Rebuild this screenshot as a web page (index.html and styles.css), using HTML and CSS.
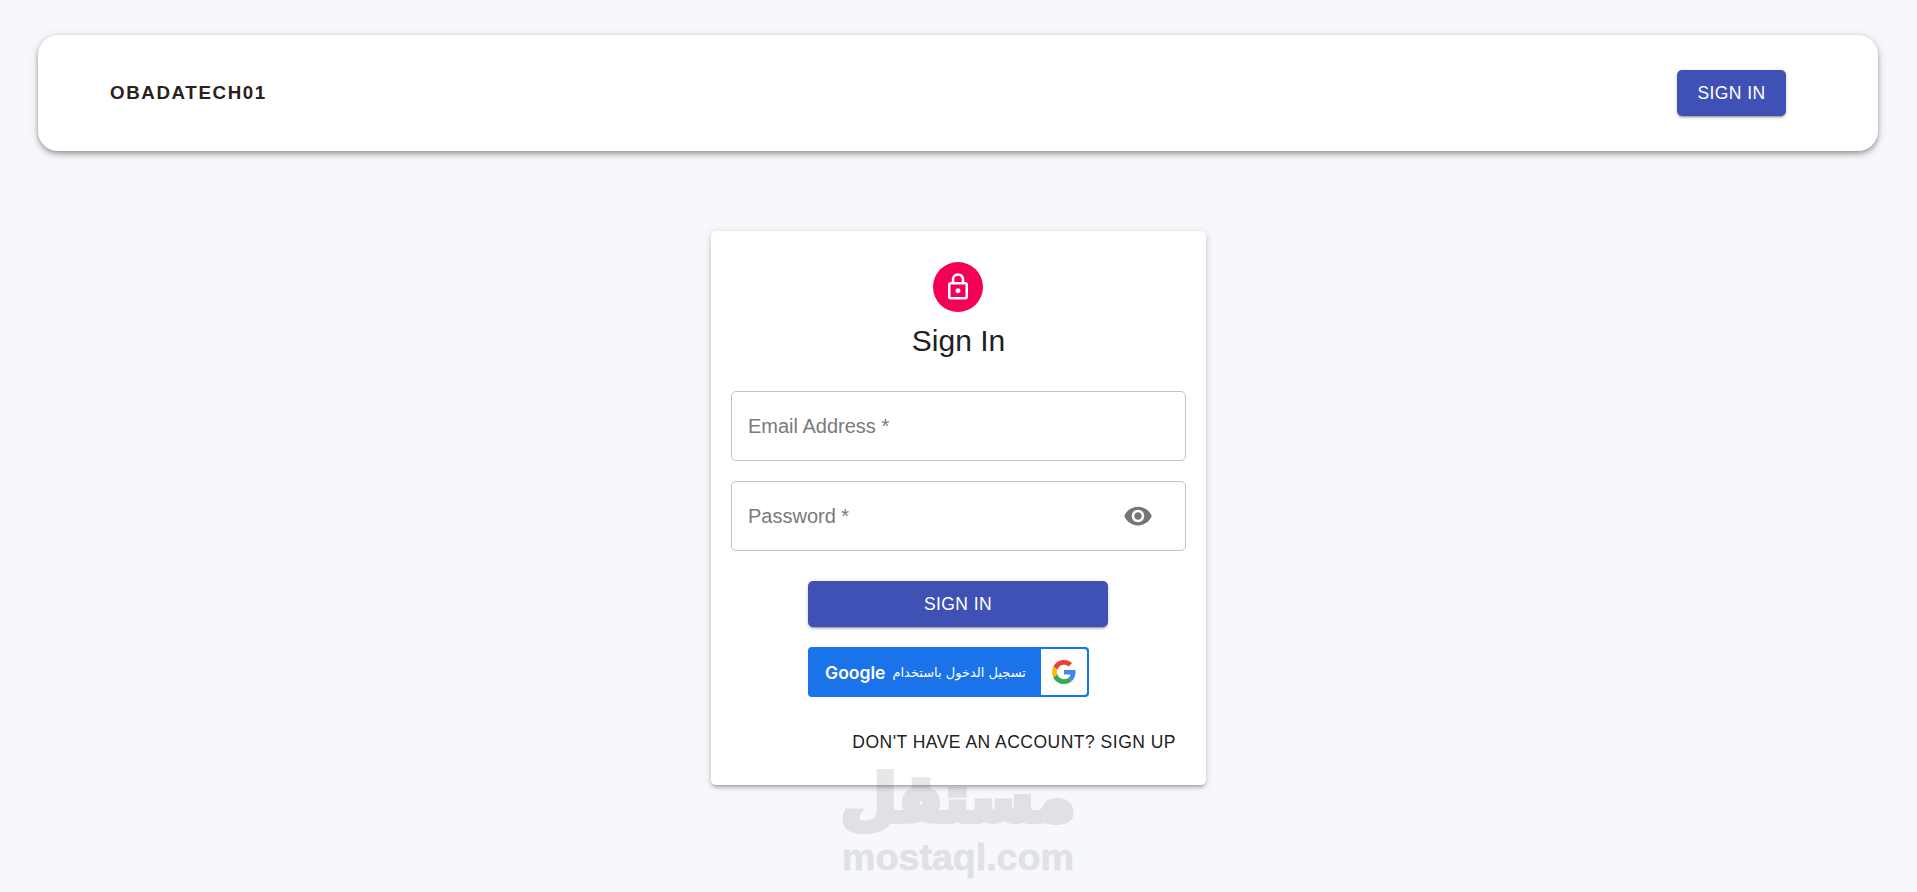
FILE: index.html
```html
<!DOCTYPE html>
<html lang="en">
<head>
  <meta charset="UTF-8">
  <title>Sign In</title>
  <link rel="stylesheet" href="styles.css">
</head>
<body>
  <header class="topbar">
    <span class="brand">OBADATECH01</span>
    <button class="btn btn-nav">Sign In</button>
  </header>

  <main class="page">
    <div class="card">
      <div class="avatar">
        <svg viewBox="0 0 24 24" width="30" height="30" fill="#fff"><path d="M18 8h-1V6c0-2.76-2.24-5-5-5S7 3.24 7 6v2H6c-1.1 0-2 .9-2 2v10c0 1.1.9 2 2 2h12c1.1 0 2-.9 2-2V10c0-1.1-.9-2-2-2zM9 6c0-1.66 1.34-3 3-3s3 1.34 3 3v2H9V6zm9 14H6V10h12v10zm-6-3c1.1 0 2-.9 2-2s-.9-2-2-2-2 .9-2 2 .9 2 2 2z"/></svg>
      </div>
      <h1 class="title">Sign In</h1>

      <div class="field"><span class="field-label">Email Address *</span></div>
      <div class="field">
        <span class="field-label">Password *</span>
        <svg class="eye" viewBox="0 0 24 24" width="30" height="30" fill="#757575"><path d="M12 4.5C7 4.5 2.73 7.61 1 12c1.73 4.39 6 7.5 11 7.5s9.27-3.11 11-7.5c-1.73-4.39-6-7.5-11-7.5zM12 17c-2.76 0-5-2.24-5-5s2.24-5 5-5 5 2.24 5 5-2.24 5-5 5zm0-8c-1.66 0-3 1.34-3 3s1.34 3 3 3 3-1.34 3-3-1.34-3-3-3z"/></svg>
      </div>

      <div class="actions">
        <button class="btn btn-submit">Sign In</button>
        <div class="google-btn">
          <span class="google-text" dir="rtl">تسجيل الدخول باستخدام <b>Google</b></span>
          <span class="google-icon">
            <svg viewBox="0 0 48 48" width="24" height="24">
              <path fill="#EA4335" d="M24 9.5c3.54 0 6.71 1.22 9.21 3.6l6.85-6.85C35.9 2.38 30.47 0 24 0 14.62 0 6.51 5.38 2.56 13.22l7.98 6.19C12.43 13.72 17.74 9.5 24 9.5z"/>
              <path fill="#4285F4" d="M46.98 24.55c0-1.57-.15-3.09-.38-4.55H24v9.02h12.94c-.58 2.96-2.26 5.48-4.78 7.18l7.73 6c4.51-4.18 7.09-10.36 7.09-17.65z"/>
              <path fill="#FBBC05" d="M10.53 28.59c-.48-1.45-.76-2.99-.76-4.59s.27-3.14.76-4.59l-7.98-6.19C.92 16.46 0 20.12 0 24c0 3.88.92 7.54 2.56 10.78l7.97-6.19z"/>
              <path fill="#34A853" d="M24 48c6.48 0 11.93-2.13 15.89-5.81l-7.73-6c-2.15 1.45-4.92 2.3-8.16 2.3-6.26 0-11.57-4.22-13.47-9.91l-7.98 6.19C6.51 42.62 14.62 48 24 48z"/>
            </svg>
          </span>
        </div>
      </div>

      <a class="signup" href="#">Don't have an account? Sign Up</a>
    </div>
  </main>

  <!-- watermark sits over everything -->
  <div class="watermark">
    <span class="wm-ar" lang="ar" dir="rtl">مستقل</span>
    <span class="wm-en">mostaql.com</span>
  </div>
</body>
</html>
```

FILE: styles.css
```css
* {
  box-sizing: border-box;
}
html, body {
  height: 100%;
}
body {
  margin: 0;
  padding: 35px 39px 0 38px;
  background: #f7f8fc;
  color: #212121;
  font-family: "Liberation Sans", Arial, sans-serif;
  overflow: hidden;
}
.topbar {
  height: 116px;
  display: flex;
  align-items: center;
  justify-content: space-between;
  padding: 0 92px 0 72px;
  background: #fff;
  border-radius: 20px;
  box-shadow: 0 2px 5px -1px rgba(0,0,0,0.3), 0 4px 6px 0 rgba(0,0,0,0.16), 0 1px 12px 0 rgba(0,0,0,0.1);
}
.brand {
  font-size: 18.75px;
  font-weight: 700;
  letter-spacing: 1.6px;
  color: #2a201c;
}
.btn {
  border: none;
  border-radius: 5px;
  background: #3f51b5;
  color: #fff;
  font-family: inherit;
  font-size: 17.5px;
  letter-spacing: 0.44px;
  text-transform: uppercase;
  box-shadow: 0 3px 1px -2px rgba(0,0,0,0.2), 0 2px 2px 0 rgba(0,0,0,0.14), 0 1px 5px 0 rgba(0,0,0,0.12);
}
.btn-nav {
  width: 109px;
  height: 46px;
}
.page {
  display: flex;
  justify-content: center;
  padding: 80px 0 0 1px;
}
.card {
  width: 495px;
  height: 554px;
  padding: 31px 20px 0;
  display: flex;
  flex-direction: column;
  align-items: center;
  background: #fff;
  border-radius: 5px;
  box-shadow: 0 3px 3px -2px rgba(0,0,0,0.2), 0 3px 4px 0 rgba(0,0,0,0.14), 0 1px 8px 0 rgba(0,0,0,0.12);
}
.avatar {
  width: 50px;
  height: 50px;
  flex: none;
  margin-right: 1px;
  display: flex;
  align-items: center;
  justify-content: center;
  border-radius: 50%;
  background: #f50057;
}
.title {
  margin: 9px 0 30px;
  font-size: 30px;
  line-height: 40px;
  font-weight: 400;
  color: #212121;
}
.field {
  width: 100%;
  height: 70px;
  flex: none;
  margin-bottom: 20px;
  padding: 0 32px 0 16px;
  display: flex;
  align-items: center;
  justify-content: space-between;
  border: 1px solid #c4c4c4;
  border-radius: 5px;
}
.field-label {
  font-size: 20px;
  color: #7a7a7a;
}
.actions {
  margin: 10px 1px 0 0;
  width: 300px;
  display: flex;
  flex-direction: column;
  gap: 20px;
}
.btn-submit {
  width: 100%;
  height: 46px;
}
.google-btn {
  width: 281px;
  height: 50px;
  padding: 2px;
  display: flex;
  justify-content: space-between;
  background: #1a73e8;
  border-radius: 4px;
}
.google-text {
  flex: 1;
  display: flex;
  align-items: center;
  justify-content: center;
  gap: 7px;
  color: #fff;
  font-family: "DejaVu Sans", sans-serif;
  font-size: 13px;
}
.google-text b {
  font-family: Inter, sans-serif;
  font-size: 17.5px;
  font-weight: 600;
}
.google-icon {
  width: 46px;
  display: flex;
  align-items: center;
  justify-content: center;
  background: #fff;
  border-radius: 0 3px 3px 0;
}
.signup {
  align-self: flex-end;
  margin: 35px 10px 0 0;
  font-size: 17.5px;
  line-height: 20px;
  letter-spacing: 0.49px;
  color: #212121;
  text-decoration: none;
  text-transform: uppercase;
}
.watermark {
  position: absolute;
  left: 843px;
  top: 759px;
  width: 230px;
  display: flex;
  flex-direction: column;
  align-items: center;
  color: #323746;
  opacity: 0.115;
  pointer-events: none;
}
.wm-ar {
  font-family: "DejaVu Sans", sans-serif;
  font-size: 64px;
  font-weight: 700;
  line-height: 80px;
  -webkit-text-stroke: 6px #323746;
  paint-order: stroke fill;
}
.wm-en {
  font-family: "Liberation Sans", Arial, sans-serif;
  font-size: 37.6px;
  font-weight: 700;
  line-height: 36px;
  -webkit-text-stroke: 0.8px #323746;
}
```
